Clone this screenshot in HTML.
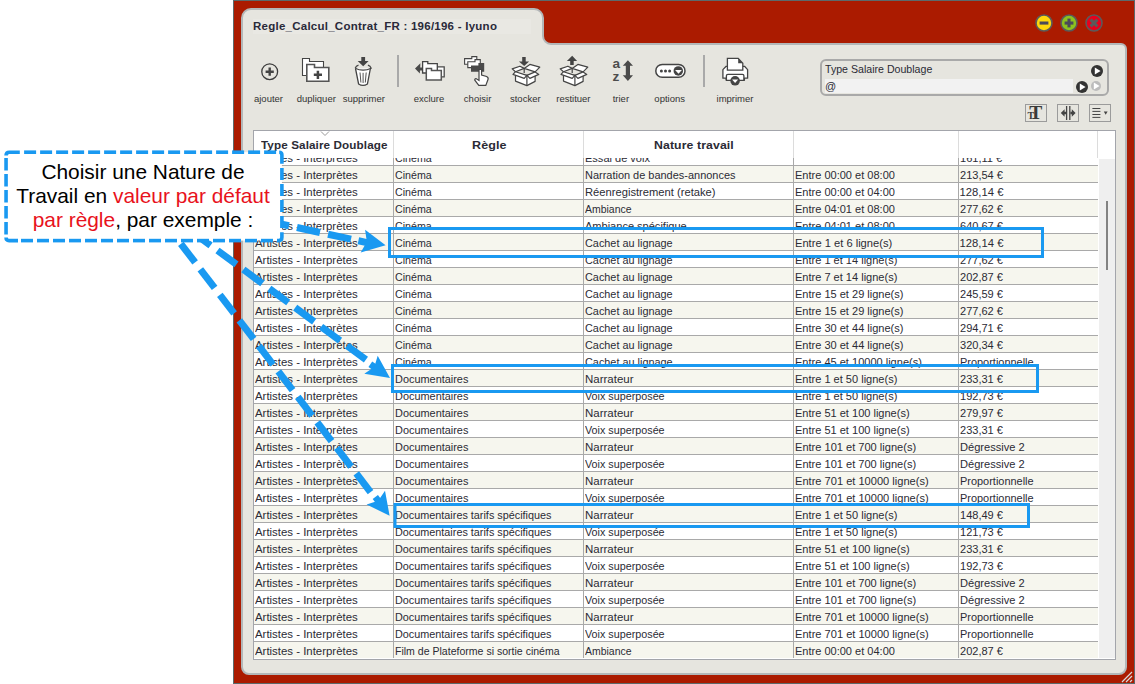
<!DOCTYPE html>
<html><head><meta charset="utf-8">
<style>
html,body{margin:0;padding:0;}
body{width:1135px;height:684px;position:relative;overflow:hidden;background:#fff;font-family:"Liberation Sans",sans-serif;}
.a{position:absolute;}
.t{position:absolute;white-space:nowrap;font-size:11.25px;line-height:17px;color:#2b2b35;}
.lbl{position:absolute;white-space:nowrap;font-size:9.5px;line-height:12px;color:#333;text-align:center;width:80px;}
</style></head><body>

<div class="a" style="left:233px;top:0;width:900px;height:682px;background:#ab1b00;border:1px solid #5c6a6b;"></div>
<svg class="a" style="left:0;top:0" width="1135" height="684"><path d="M 242 18 A 9 9 0 0 1 251 9 H 534 A 9 9 0 0 1 543 18 V 36 A 8 8 0 0 0 551 44 H 1121 A 5 5 0 0 1 1126 49 V 667 A 7 7 0 0 1 1119 674 H 249 A 7 7 0 0 1 242 667 Z" fill="#e6e5df" stroke="#b3b7b8" stroke-width="2"/></svg>
<div class="a" style="left:253px;top:19px;width:278px;height:15px;background:#e9e8e3;"></div>
<div class="a" style="left:253px;top:18px;white-space:nowrap;font-size:11.5px;letter-spacing:0.25px;font-weight:bold;color:#2a2a3a;line-height:17px;">Regle_Calcul_Contrat_FR : 196/196 - Iyuno</div>
<svg class="a" style="left:1033.6px;top:12.8px" width="20" height="20" viewBox="0 0 20 20"><circle cx="10" cy="10" r="8.0" fill="#fed80c" stroke="#5a5a5a" stroke-width="1.6"/><rect x="5.6" y="8.5" width="8.8" height="3.1" fill="#4a4a5a"/></svg>
<svg class="a" style="left:1058.7px;top:12.8px" width="20" height="20" viewBox="0 0 20 20"><circle cx="10" cy="10" r="8.0" fill="#8cc21e" stroke="#5a5a5a" stroke-width="1.6"/><rect x="5.6" y="8.5" width="8.8" height="3.1" fill="#4a4a5a"/><rect x="8.45" y="5.6" width="3.1" height="8.8" fill="#4a4a5a"/></svg>
<svg class="a" style="left:1083.8px;top:12.8px" width="20" height="20" viewBox="0 0 20 20"><circle cx="10" cy="10" r="8.0" fill="#e8001c" stroke="#5a5a5a" stroke-width="1.6"/><path d="M6.6 6.6 L13.4 13.4 M13.4 6.6 L6.6 13.4" stroke="#5a5a5a" stroke-width="3"/></svg>
<div class="a" style="left:397px;top:55px;width:2px;height:32px;background:#a9a9a9;"></div>
<div class="a" style="left:703px;top:55px;width:2px;height:32px;background:#a9a9a9;"></div>
<div class="lbl" style="left:228.5px;top:93px;">ajouter</div>
<div class="lbl" style="left:276.3px;top:93px;">dupliquer</div>
<div class="lbl" style="left:323.8px;top:93px;">supprimer</div>
<div class="lbl" style="left:389px;top:93px;">exclure</div>
<div class="lbl" style="left:437.6px;top:93px;">choisir</div>
<div class="lbl" style="left:485.29999999999995px;top:93px;">stocker</div>
<div class="lbl" style="left:533.4px;top:93px;">restituer</div>
<div class="lbl" style="left:580.9px;top:93px;">trier</div>
<div class="lbl" style="left:629.7px;top:93px;">options</div>
<div class="lbl" style="left:695px;top:93px;">imprimer</div>
<svg class="a" style="left:0;top:0" width="1135" height="130" viewBox="0 0 1135 130">
<g fill="none" stroke="#3c3c3c">
 <!-- ajouter -->
 <circle cx="269.7" cy="71.7" r="7.9" stroke-width="1.3"/>
 <path d="M265.6 71.7 H273.8 M269.7 67.6 V75.8" stroke-width="2.4" stroke="#444"/>
</g>
<!-- dupliquer -->
<path d="M302.5 75.5 V58.5 H309.5 V61.5 H323.5 V75.5 Z" fill="#fff" stroke="#444" stroke-width="1.1"/>
<path d="M306.8 81.2 V64.5 H314.5 V67.5 H328.8 V81.2 Z" fill="#fff" stroke="#555" stroke-width="1.6"/>
<path d="M313.8 74.8 H322 M317.9 70.7 V78.9" stroke="#444" stroke-width="2.5"/>
<!-- supprimer -->
<path d="M361.3 57 H365.1 V61 H368.6 L363.2 66.3 L357.7 61 H361.3 Z" fill="#444"/>
<path d="M355.5 68.5 L358.6 84 Q363 86.8 367.4 84 L370.4 68.5" fill="#fff" stroke="#444" stroke-width="1.3"/>
<path d="M355.2 68.2 Q356 65.8 358.5 65.2 M367.9 65.2 Q370.4 65.8 371.2 68.2 Q363 72 355.2 68.2" fill="none" stroke="#444" stroke-width="1.2"/>
<path d="M360 72.5 L360.9 82.5 M363.1 72.8 V83 M366.2 72.5 L365.3 82.5" stroke="#555" stroke-width="1"/>
<!-- exclure -->
<path d="M415 68.6 L420.4 63.3 L420.2 67.4 H424 V70.4 H420 L419.8 73.4 Z" fill="#4a4a4a"/>
<path d="M432 76.9 V66.9 H444.2 V76.9 Z" fill="#fff" stroke="#4a4a4a" stroke-width="1.3"/>
<path d="M422.6 73 V61.6 H427.8 V63.6 H437.3 V73 Z" fill="#fff" stroke="#444" stroke-width="1.3"/>
<path d="M426.3 79.9 V68.6 H431.5 V70.6 H441.3 V79.9 Z" fill="#fff" stroke="#555" stroke-width="1.5"/>
<!-- choisir -->
<path d="M464.6 64.3 V58.6 H471.8 V56.6 H476.8 V64.3 Z" fill="#fff" stroke="#444" stroke-width="1.1"/>
<path d="M467.8 67.6 V61.7 H475 V59.6 H480.3 V67.6 Z" fill="#fff" stroke="#444" stroke-width="1.1"/>
<path d="M471 71.7 V65.4 H478.4 V63 H484.2 V71.7 Z" fill="#4a4a4a"/>
<path d="M479 69.5 H481.6 V75 L486.6 76.5 Q488.7 77.5 488 79.5 L485.8 85.4 H478.8 L474.8 80.2 Q474.5 78.7 476 78.6 L479 80.5 Z" fill="#fff" stroke="#444" stroke-width="1.2"/>
<!-- stocker -->
<g>
<path d="M522.2 57 H525.7 V61.5 H529.1 L524.2 65.9 L518.9 61.5 H522.2 Z" fill="#444"/>
<g fill="#fff" stroke="#444" stroke-width="1.2" stroke-linejoin="round">
<path d="M515.5 71.7 L524.2 68.4 L519.9 66.2 L512.2 68.9 Z"/>
<path d="M524.2 68.4 L535.1 71.9 L539.8 67.2 L529.9 64.4 Z"/>
<path d="M515.5 75.2 L515.5 81.1 L526.9 85.6 L535.1 81.4 L535.1 75.2 L526.9 75.4 Z"/>
<path d="M524.2 68.4 V73" fill="none"/>
<path d="M515.5 71.7 L526.9 75.4 L524.2 78.4 L513 74.4 Z"/>
<path d="M526.9 75.4 L535.1 71.9 L538.8 74.4 L529.9 78.4 Z"/>
<path d="M526.9 75.4 V85.4" fill="none"/>
</g>
</g>
<!-- restituer -->
<g transform="translate(48 0)">
<path d="M522.2 65 H525.7 V61 H529.1 L524.2 55.7 L518.9 61 H522.2 Z" fill="#444"/>
<g fill="#fff" stroke="#444" stroke-width="1.2" stroke-linejoin="round">
<path d="M515.5 71.7 L524.2 68.4 L519.9 66.2 L512.2 68.9 Z"/>
<path d="M524.2 68.4 L535.1 71.9 L539.8 67.2 L529.9 64.4 Z"/>
<path d="M515.5 75.2 L515.5 81.1 L526.9 85.6 L535.1 81.4 L535.1 75.2 L526.9 75.4 Z"/>
<path d="M524.2 68.4 V73" fill="none"/>
<path d="M515.5 71.7 L526.9 75.4 L524.2 78.4 L513 74.4 Z"/>
<path d="M526.9 75.4 L535.1 71.9 L538.8 74.4 L529.9 78.4 Z"/>
<path d="M526.9 75.4 V85.4" fill="none"/>
</g>
</g>
<!-- trier -->
<text x="612.4" y="67.9" font-family="Liberation Sans" font-weight="bold" font-size="13.6" fill="#4d4d4d">a</text>
<text x="612.6" y="81" font-family="Liberation Sans" font-weight="bold" font-size="13.6" fill="#4d4d4d">z</text>
<path d="M627.9 60.3 L633 65.7 H630 V75.3 H633 L627.9 80.9 L622.8 75.3 H625.8 V65.7 H622.8 Z" fill="#4a4a4a"/>
<!-- options -->
<rect x="655.8" y="64.45" width="29.2" height="12.9" rx="6.45" fill="#fff" stroke="#444" stroke-width="1.5"/>
<circle cx="661.4" cy="71.1" r="1.5" fill="#444"/><circle cx="665.5" cy="71.1" r="1.5" fill="#444"/><circle cx="669.6" cy="71.1" r="1.5" fill="#444"/>
<circle cx="678.3" cy="70.9" r="4.75" fill="#444"/>
<path d="M675.1 70 H681.9 L678.5 73.8 Z" fill="#fff"/>
<!-- imprimer -->
<path d="M722.9 78.2 V69.6 L726.2 66.3 H744.5 L747.6 69.6 V78.2 H744.4 V80.3 H726.2 V78.2 Z" fill="#fff" stroke="#444" stroke-width="1.3" stroke-linejoin="round"/>
<path d="M727.4 70.1 V58.4 H738.2 L742.8 63.2 V70.1 Z" fill="#fff" stroke="#444" stroke-width="1.3"/>
<path d="M738.2 58.4 L742.8 63.2 H738.2 Z" fill="#444"/>
<path d="M726.4 80 V75.8 Q726.4 74.3 727.9 74.3 H742.4 Q743.9 74.3 743.9 75.8 V80" fill="none" stroke="#444" stroke-width="1.3"/>
<circle cx="735.1" cy="80.8" r="4.8" fill="#444"/>
<path d="M732.1 79.5 H738.1 L735.1 83.1 Z" fill="#fff"/>
</svg>

<div class="a" style="left:820px;top:59px;width:285px;height:33px;border:2px solid #a9a9a9;border-radius:6px;"></div>
<div class="a" style="left:825px;top:79px;width:248px;height:14px;background:#f2f2f2;"></div>
<div class="a" style="left:824.6px;top:62px;white-space:nowrap;font-size:11px;line-height:15px;color:#2b2b35;transform:scaleX(0.964);transform-origin:0 0;">Type Salaire Doublage</div>
<div class="a" style="left:825px;top:79px;white-space:nowrap;font-size:11px;line-height:14px;color:#2b2b35;">@</div>
<svg class="a" style="left:1091.2px;top:65.0px" width="12" height="12" viewBox="0 0 12 12"><circle cx="6.0" cy="6.0" r="6.0" fill="#333"/><path d="M 3.8 2.5 L 9.6 6.0 L 3.8 9.5 Z" fill="#fff"/></svg>
<svg class="a" style="left:1076.2px;top:80.7px" width="12" height="12" viewBox="0 0 12 12"><circle cx="6.0" cy="6.0" r="6.0" fill="#333"/><path d="M 3.8 2.5 L 9.6 6.0 L 3.8 9.5 Z" fill="#fff"/></svg>
<svg class="a" style="left:1091.0px;top:81.0px" width="10" height="10" viewBox="0 0 10 10"><circle cx="5.0" cy="5.0" r="5.0" fill="#bcbcbc"/><path d="M 2.8 1.5 L 8.6 5.0 L 2.8 8.5 Z" fill="#fff"/></svg>
<div class="a" style="left:1025px;top:104px;width:20px;height:16px;border:1px solid #9b9b9b;"></div>
<div class="a" style="left:1057px;top:104px;width:20px;height:16px;border:1px solid #9b9b9b;"></div>
<div class="a" style="left:1089px;top:104px;width:20px;height:16px;border:1px solid #9b9b9b;"></div>
<svg class="a" style="left:1020px;top:100px" width="95" height="26" viewBox="1020 100 95 26">
<text x="1029.2" y="119.2" font-family="Liberation Serif" font-weight="bold" font-size="19.5" fill="#3a3a3a">T</text>
<text x="1027.6" y="119.4" font-family="Liberation Serif" font-weight="bold" font-size="10" fill="#3a3a3a">T</text>
<path d="M1066.6 106 V120 M1069.8 106 V120" stroke="#444" stroke-width="1.3"/>
<path d="M1060.8 113 L1064.6 109.2 V111.8 H1066 V114.2 H1064.6 V116.8 Z M1075.6 113 L1071.8 109.2 V111.8 H1070.4 V114.2 H1071.8 V116.8 Z" fill="#444"/>
<path d="M1092.4 108.5 H1100.4 M1092.4 111.4 H1100.4 M1092.4 114.5 H1100.4 M1092.4 117.4 H1100.4" stroke="#444" stroke-width="1"/>
<path d="M1103.8 111.4 H1107.6 L1105.7 114.7 Z" fill="#444"/>
</svg>

<div class="a" style="left:253px;top:130px;width:863px;height:530px;background:#fff;border:1px solid #a3a5ab;box-sizing:border-box;"></div>
<div class="a" style="left:254px;top:158px;width:861px;height:500px;overflow:hidden;"><div class="a" style="left:-254px;top:-158px;width:1135px;height:684px;"><div class="a" style="left:254px;top:149px;width:844px;height:16px;background:#ffffff;"></div><div class="a" style="left:254px;top:165px;width:844px;height:1px;background:#a9a9a9;"></div><div class="t" style="left:254.6px;top:150px;transform:scaleX(1.014);transform-origin:0 0;">Artistes - Interprètes</div><div class="t" style="left:394.6px;top:150px;transform:scaleX(0.946);transform-origin:0 0;">Cinéma</div><div class="t" style="left:584.6px;top:150px;transform:scaleX(0.98);transform-origin:0 0;">Essai de voix</div><div class="t" style="left:959.6px;top:150px;transform:scaleX(0.98);transform-origin:0 0;">161,11 €</div><div class="a" style="left:254px;top:166px;width:844px;height:16px;background:#f6f6ee;"></div><div class="a" style="left:254px;top:182px;width:844px;height:1px;background:#a9a9a9;"></div><div class="t" style="left:254.6px;top:167px;transform:scaleX(1.014);transform-origin:0 0;">Artistes - Interprètes</div><div class="t" style="left:394.6px;top:167px;transform:scaleX(0.946);transform-origin:0 0;">Cinéma</div><div class="t" style="left:584.6px;top:167px;transform:scaleX(0.974);transform-origin:0 0;">Narration de bandes-annonces</div><div class="t" style="left:794.6px;top:167px;transform:scaleX(0.98);transform-origin:0 0;">Entre 00:00 et 08:00</div><div class="t" style="left:959.6px;top:167px;transform:scaleX(0.98);transform-origin:0 0;">213,54 €</div><div class="a" style="left:254px;top:183px;width:844px;height:16px;background:#ffffff;"></div><div class="a" style="left:254px;top:199px;width:844px;height:1px;background:#a9a9a9;"></div><div class="t" style="left:254.6px;top:184px;transform:scaleX(1.014);transform-origin:0 0;">Artistes - Interprètes</div><div class="t" style="left:394.6px;top:184px;transform:scaleX(0.946);transform-origin:0 0;">Cinéma</div><div class="t" style="left:584.6px;top:184px;transform:scaleX(0.994);transform-origin:0 0;">Réenregistrement (retake)</div><div class="t" style="left:794.6px;top:184px;transform:scaleX(0.98);transform-origin:0 0;">Entre 00:00 et 04:00</div><div class="t" style="left:959.6px;top:184px;transform:scaleX(1.0);transform-origin:0 0;">128,14 €</div><div class="a" style="left:254px;top:200px;width:844px;height:16px;background:#f6f6ee;"></div><div class="a" style="left:254px;top:216px;width:844px;height:1px;background:#a9a9a9;"></div><div class="t" style="left:254.6px;top:201px;transform:scaleX(1.014);transform-origin:0 0;">Artistes - Interprètes</div><div class="t" style="left:394.6px;top:201px;transform:scaleX(0.946);transform-origin:0 0;">Cinéma</div><div class="t" style="left:584.6px;top:201px;transform:scaleX(0.93);transform-origin:0 0;">Ambiance</div><div class="t" style="left:794.6px;top:201px;transform:scaleX(0.98);transform-origin:0 0;">Entre 04:01 et 08:00</div><div class="t" style="left:959.6px;top:201px;transform:scaleX(0.98);transform-origin:0 0;">277,62 €</div><div class="a" style="left:254px;top:217px;width:844px;height:16px;background:#ffffff;"></div><div class="a" style="left:254px;top:233px;width:844px;height:1px;background:#a9a9a9;"></div><div class="t" style="left:254.6px;top:218px;transform:scaleX(1.014);transform-origin:0 0;">Artistes - Interprètes</div><div class="t" style="left:394.6px;top:218px;transform:scaleX(0.946);transform-origin:0 0;">Cinéma</div><div class="t" style="left:584.6px;top:218px;transform:scaleX(0.98);transform-origin:0 0;">Ambiance spécifique</div><div class="t" style="left:794.6px;top:218px;transform:scaleX(0.98);transform-origin:0 0;">Entre 04:01 et 08:00</div><div class="t" style="left:959.6px;top:218px;transform:scaleX(0.98);transform-origin:0 0;">640,67 €</div><div class="a" style="left:254px;top:234px;width:844px;height:16px;background:#f6f6ee;"></div><div class="a" style="left:254px;top:250px;width:844px;height:1px;background:#a9a9a9;"></div><div class="t" style="left:254.6px;top:235px;transform:scaleX(1.014);transform-origin:0 0;">Artistes - Interprètes</div><div class="t" style="left:394.6px;top:235px;transform:scaleX(0.946);transform-origin:0 0;">Cinéma</div><div class="t" style="left:584.6px;top:235px;transform:scaleX(0.966);transform-origin:0 0;">Cachet au lignage</div><div class="t" style="left:794.6px;top:235px;transform:scaleX(0.99);transform-origin:0 0;">Entre 1 et 6 ligne(s)</div><div class="t" style="left:959.6px;top:235px;transform:scaleX(1.0);transform-origin:0 0;">128,14 €</div><div class="a" style="left:254px;top:251px;width:844px;height:16px;background:#ffffff;"></div><div class="a" style="left:254px;top:267px;width:844px;height:1px;background:#a9a9a9;"></div><div class="t" style="left:254.6px;top:252px;transform:scaleX(1.014);transform-origin:0 0;">Artistes - Interprètes</div><div class="t" style="left:394.6px;top:252px;transform:scaleX(0.946);transform-origin:0 0;">Cinéma</div><div class="t" style="left:584.6px;top:252px;transform:scaleX(0.966);transform-origin:0 0;">Cachet au lignage</div><div class="t" style="left:794.6px;top:252px;transform:scaleX(0.98);transform-origin:0 0;">Entre 1 et 14 ligne(s)</div><div class="t" style="left:959.6px;top:252px;transform:scaleX(0.98);transform-origin:0 0;">277,62 €</div><div class="a" style="left:254px;top:268px;width:844px;height:16px;background:#f6f6ee;"></div><div class="a" style="left:254px;top:284px;width:844px;height:1px;background:#a9a9a9;"></div><div class="t" style="left:254.6px;top:269px;transform:scaleX(1.014);transform-origin:0 0;">Artistes - Interprètes</div><div class="t" style="left:394.6px;top:269px;transform:scaleX(0.946);transform-origin:0 0;">Cinéma</div><div class="t" style="left:584.6px;top:269px;transform:scaleX(0.966);transform-origin:0 0;">Cachet au lignage</div><div class="t" style="left:794.6px;top:269px;transform:scaleX(0.98);transform-origin:0 0;">Entre 7 et 14 ligne(s)</div><div class="t" style="left:959.6px;top:269px;transform:scaleX(0.98);transform-origin:0 0;">202,87 €</div><div class="a" style="left:254px;top:285px;width:844px;height:16px;background:#ffffff;"></div><div class="a" style="left:254px;top:301px;width:844px;height:1px;background:#a9a9a9;"></div><div class="t" style="left:254.6px;top:286px;transform:scaleX(1.014);transform-origin:0 0;">Artistes - Interprètes</div><div class="t" style="left:394.6px;top:286px;transform:scaleX(0.946);transform-origin:0 0;">Cinéma</div><div class="t" style="left:584.6px;top:286px;transform:scaleX(0.966);transform-origin:0 0;">Cachet au lignage</div><div class="t" style="left:794.6px;top:286px;transform:scaleX(0.98);transform-origin:0 0;">Entre 15 et 29 ligne(s)</div><div class="t" style="left:959.6px;top:286px;transform:scaleX(0.98);transform-origin:0 0;">245,59 €</div><div class="a" style="left:254px;top:302px;width:844px;height:16px;background:#f6f6ee;"></div><div class="a" style="left:254px;top:318px;width:844px;height:1px;background:#a9a9a9;"></div><div class="t" style="left:254.6px;top:303px;transform:scaleX(1.014);transform-origin:0 0;">Artistes - Interprètes</div><div class="t" style="left:394.6px;top:303px;transform:scaleX(0.946);transform-origin:0 0;">Cinéma</div><div class="t" style="left:584.6px;top:303px;transform:scaleX(0.966);transform-origin:0 0;">Cachet au lignage</div><div class="t" style="left:794.6px;top:303px;transform:scaleX(0.98);transform-origin:0 0;">Entre 15 et 29 ligne(s)</div><div class="t" style="left:959.6px;top:303px;transform:scaleX(0.98);transform-origin:0 0;">277,62 €</div><div class="a" style="left:254px;top:319px;width:844px;height:16px;background:#ffffff;"></div><div class="a" style="left:254px;top:335px;width:844px;height:1px;background:#a9a9a9;"></div><div class="t" style="left:254.6px;top:320px;transform:scaleX(1.014);transform-origin:0 0;">Artistes - Interprètes</div><div class="t" style="left:394.6px;top:320px;transform:scaleX(0.946);transform-origin:0 0;">Cinéma</div><div class="t" style="left:584.6px;top:320px;transform:scaleX(0.966);transform-origin:0 0;">Cachet au lignage</div><div class="t" style="left:794.6px;top:320px;transform:scaleX(0.98);transform-origin:0 0;">Entre 30 et 44 ligne(s)</div><div class="t" style="left:959.6px;top:320px;transform:scaleX(0.98);transform-origin:0 0;">294,71 €</div><div class="a" style="left:254px;top:336px;width:844px;height:16px;background:#f6f6ee;"></div><div class="a" style="left:254px;top:352px;width:844px;height:1px;background:#a9a9a9;"></div><div class="t" style="left:254.6px;top:337px;transform:scaleX(1.014);transform-origin:0 0;">Artistes - Interprètes</div><div class="t" style="left:394.6px;top:337px;transform:scaleX(0.946);transform-origin:0 0;">Cinéma</div><div class="t" style="left:584.6px;top:337px;transform:scaleX(0.966);transform-origin:0 0;">Cachet au lignage</div><div class="t" style="left:794.6px;top:337px;transform:scaleX(0.98);transform-origin:0 0;">Entre 30 et 44 ligne(s)</div><div class="t" style="left:959.6px;top:337px;transform:scaleX(0.98);transform-origin:0 0;">320,34 €</div><div class="a" style="left:254px;top:353px;width:844px;height:16px;background:#ffffff;"></div><div class="a" style="left:254px;top:369px;width:844px;height:1px;background:#a9a9a9;"></div><div class="t" style="left:254.6px;top:354px;transform:scaleX(1.014);transform-origin:0 0;">Artistes - Interprètes</div><div class="t" style="left:394.6px;top:354px;transform:scaleX(0.946);transform-origin:0 0;">Cinéma</div><div class="t" style="left:584.6px;top:354px;transform:scaleX(0.966);transform-origin:0 0;">Cachet au lignage</div><div class="t" style="left:794.6px;top:354px;transform:scaleX(0.98);transform-origin:0 0;">Entre 45 et 10000 ligne(s)</div><div class="t" style="left:959.6px;top:354px;transform:scaleX(0.973);transform-origin:0 0;">Proportionnelle</div><div class="a" style="left:254px;top:370px;width:844px;height:16px;background:#f6f6ee;"></div><div class="a" style="left:254px;top:386px;width:844px;height:1px;background:#a9a9a9;"></div><div class="t" style="left:254.6px;top:371px;transform:scaleX(1.014);transform-origin:0 0;">Artistes - Interprètes</div><div class="t" style="left:394.6px;top:371px;transform:scaleX(0.97);transform-origin:0 0;">Documentaires</div><div class="t" style="left:584.6px;top:371px;transform:scaleX(1.02);transform-origin:0 0;">Narrateur</div><div class="t" style="left:794.6px;top:371px;transform:scaleX(0.98);transform-origin:0 0;">Entre 1 et 50 ligne(s)</div><div class="t" style="left:959.6px;top:371px;transform:scaleX(0.98);transform-origin:0 0;">233,31 €</div><div class="a" style="left:254px;top:387px;width:844px;height:16px;background:#ffffff;"></div><div class="a" style="left:254px;top:403px;width:844px;height:1px;background:#a9a9a9;"></div><div class="t" style="left:254.6px;top:388px;transform:scaleX(1.014);transform-origin:0 0;">Artistes - Interprètes</div><div class="t" style="left:394.6px;top:388px;transform:scaleX(0.97);transform-origin:0 0;">Documentaires</div><div class="t" style="left:584.6px;top:388px;transform:scaleX(0.957);transform-origin:0 0;">Voix superposée</div><div class="t" style="left:794.6px;top:388px;transform:scaleX(0.98);transform-origin:0 0;">Entre 1 et 50 ligne(s)</div><div class="t" style="left:959.6px;top:388px;transform:scaleX(0.98);transform-origin:0 0;">192,73 €</div><div class="a" style="left:254px;top:404px;width:844px;height:16px;background:#f6f6ee;"></div><div class="a" style="left:254px;top:420px;width:844px;height:1px;background:#a9a9a9;"></div><div class="t" style="left:254.6px;top:405px;transform:scaleX(1.014);transform-origin:0 0;">Artistes - Interprètes</div><div class="t" style="left:394.6px;top:405px;transform:scaleX(0.97);transform-origin:0 0;">Documentaires</div><div class="t" style="left:584.6px;top:405px;transform:scaleX(1.02);transform-origin:0 0;">Narrateur</div><div class="t" style="left:794.6px;top:405px;transform:scaleX(0.98);transform-origin:0 0;">Entre 51 et 100 ligne(s)</div><div class="t" style="left:959.6px;top:405px;transform:scaleX(0.98);transform-origin:0 0;">279,97 €</div><div class="a" style="left:254px;top:421px;width:844px;height:16px;background:#ffffff;"></div><div class="a" style="left:254px;top:437px;width:844px;height:1px;background:#a9a9a9;"></div><div class="t" style="left:254.6px;top:422px;transform:scaleX(1.014);transform-origin:0 0;">Artistes - Interprètes</div><div class="t" style="left:394.6px;top:422px;transform:scaleX(0.97);transform-origin:0 0;">Documentaires</div><div class="t" style="left:584.6px;top:422px;transform:scaleX(0.957);transform-origin:0 0;">Voix superposée</div><div class="t" style="left:794.6px;top:422px;transform:scaleX(0.98);transform-origin:0 0;">Entre 51 et 100 ligne(s)</div><div class="t" style="left:959.6px;top:422px;transform:scaleX(0.98);transform-origin:0 0;">233,31 €</div><div class="a" style="left:254px;top:438px;width:844px;height:16px;background:#f6f6ee;"></div><div class="a" style="left:254px;top:454px;width:844px;height:1px;background:#a9a9a9;"></div><div class="t" style="left:254.6px;top:439px;transform:scaleX(1.014);transform-origin:0 0;">Artistes - Interprètes</div><div class="t" style="left:394.6px;top:439px;transform:scaleX(0.97);transform-origin:0 0;">Documentaires</div><div class="t" style="left:584.6px;top:439px;transform:scaleX(1.02);transform-origin:0 0;">Narrateur</div><div class="t" style="left:794.6px;top:439px;transform:scaleX(0.983);transform-origin:0 0;">Entre 101 et 700 ligne(s)</div><div class="t" style="left:959.6px;top:439px;transform:scaleX(0.986);transform-origin:0 0;">Dégressive 2</div><div class="a" style="left:254px;top:455px;width:844px;height:16px;background:#ffffff;"></div><div class="a" style="left:254px;top:471px;width:844px;height:1px;background:#a9a9a9;"></div><div class="t" style="left:254.6px;top:456px;transform:scaleX(1.014);transform-origin:0 0;">Artistes - Interprètes</div><div class="t" style="left:394.6px;top:456px;transform:scaleX(0.97);transform-origin:0 0;">Documentaires</div><div class="t" style="left:584.6px;top:456px;transform:scaleX(0.957);transform-origin:0 0;">Voix superposée</div><div class="t" style="left:794.6px;top:456px;transform:scaleX(0.983);transform-origin:0 0;">Entre 101 et 700 ligne(s)</div><div class="t" style="left:959.6px;top:456px;transform:scaleX(0.986);transform-origin:0 0;">Dégressive 2</div><div class="a" style="left:254px;top:472px;width:844px;height:16px;background:#f6f6ee;"></div><div class="a" style="left:254px;top:488px;width:844px;height:1px;background:#a9a9a9;"></div><div class="t" style="left:254.6px;top:473px;transform:scaleX(1.014);transform-origin:0 0;">Artistes - Interprètes</div><div class="t" style="left:394.6px;top:473px;transform:scaleX(0.97);transform-origin:0 0;">Documentaires</div><div class="t" style="left:584.6px;top:473px;transform:scaleX(1.02);transform-origin:0 0;">Narrateur</div><div class="t" style="left:794.6px;top:473px;transform:scaleX(0.985);transform-origin:0 0;">Entre 701 et 10000 ligne(s)</div><div class="t" style="left:959.6px;top:473px;transform:scaleX(0.973);transform-origin:0 0;">Proportionnelle</div><div class="a" style="left:254px;top:489px;width:844px;height:16px;background:#ffffff;"></div><div class="a" style="left:254px;top:505px;width:844px;height:1px;background:#a9a9a9;"></div><div class="t" style="left:254.6px;top:490px;transform:scaleX(1.014);transform-origin:0 0;">Artistes - Interprètes</div><div class="t" style="left:394.6px;top:490px;transform:scaleX(0.97);transform-origin:0 0;">Documentaires</div><div class="t" style="left:584.6px;top:490px;transform:scaleX(0.957);transform-origin:0 0;">Voix superposée</div><div class="t" style="left:794.6px;top:490px;transform:scaleX(0.985);transform-origin:0 0;">Entre 701 et 10000 ligne(s)</div><div class="t" style="left:959.6px;top:490px;transform:scaleX(0.973);transform-origin:0 0;">Proportionnelle</div><div class="a" style="left:254px;top:506px;width:844px;height:16px;background:#f6f6ee;"></div><div class="a" style="left:254px;top:522px;width:844px;height:1px;background:#a9a9a9;"></div><div class="t" style="left:254.6px;top:507px;transform:scaleX(1.014);transform-origin:0 0;">Artistes - Interprètes</div><div class="t" style="left:394.6px;top:507px;transform:scaleX(0.9625);transform-origin:0 0;">Documentaires tarifs spécifiques</div><div class="t" style="left:584.6px;top:507px;transform:scaleX(1.02);transform-origin:0 0;">Narrateur</div><div class="t" style="left:794.6px;top:507px;transform:scaleX(0.98);transform-origin:0 0;">Entre 1 et 50 ligne(s)</div><div class="t" style="left:959.6px;top:507px;transform:scaleX(0.98);transform-origin:0 0;">148,49 €</div><div class="a" style="left:254px;top:523px;width:844px;height:16px;background:#ffffff;"></div><div class="a" style="left:254px;top:539px;width:844px;height:1px;background:#a9a9a9;"></div><div class="t" style="left:254.6px;top:524px;transform:scaleX(1.014);transform-origin:0 0;">Artistes - Interprètes</div><div class="t" style="left:394.6px;top:524px;transform:scaleX(0.9625);transform-origin:0 0;">Documentaires tarifs spécifiques</div><div class="t" style="left:584.6px;top:524px;transform:scaleX(0.957);transform-origin:0 0;">Voix superposée</div><div class="t" style="left:794.6px;top:524px;transform:scaleX(0.98);transform-origin:0 0;">Entre 1 et 50 ligne(s)</div><div class="t" style="left:959.6px;top:524px;transform:scaleX(0.98);transform-origin:0 0;">121,73 €</div><div class="a" style="left:254px;top:540px;width:844px;height:16px;background:#f6f6ee;"></div><div class="a" style="left:254px;top:556px;width:844px;height:1px;background:#a9a9a9;"></div><div class="t" style="left:254.6px;top:541px;transform:scaleX(1.014);transform-origin:0 0;">Artistes - Interprètes</div><div class="t" style="left:394.6px;top:541px;transform:scaleX(0.9625);transform-origin:0 0;">Documentaires tarifs spécifiques</div><div class="t" style="left:584.6px;top:541px;transform:scaleX(1.02);transform-origin:0 0;">Narrateur</div><div class="t" style="left:794.6px;top:541px;transform:scaleX(0.98);transform-origin:0 0;">Entre 51 et 100 ligne(s)</div><div class="t" style="left:959.6px;top:541px;transform:scaleX(0.98);transform-origin:0 0;">233,31 €</div><div class="a" style="left:254px;top:557px;width:844px;height:16px;background:#ffffff;"></div><div class="a" style="left:254px;top:573px;width:844px;height:1px;background:#a9a9a9;"></div><div class="t" style="left:254.6px;top:558px;transform:scaleX(1.014);transform-origin:0 0;">Artistes - Interprètes</div><div class="t" style="left:394.6px;top:558px;transform:scaleX(0.9625);transform-origin:0 0;">Documentaires tarifs spécifiques</div><div class="t" style="left:584.6px;top:558px;transform:scaleX(0.957);transform-origin:0 0;">Voix superposée</div><div class="t" style="left:794.6px;top:558px;transform:scaleX(0.98);transform-origin:0 0;">Entre 51 et 100 ligne(s)</div><div class="t" style="left:959.6px;top:558px;transform:scaleX(0.98);transform-origin:0 0;">192,73 €</div><div class="a" style="left:254px;top:574px;width:844px;height:16px;background:#f6f6ee;"></div><div class="a" style="left:254px;top:590px;width:844px;height:1px;background:#a9a9a9;"></div><div class="t" style="left:254.6px;top:575px;transform:scaleX(1.014);transform-origin:0 0;">Artistes - Interprètes</div><div class="t" style="left:394.6px;top:575px;transform:scaleX(0.9625);transform-origin:0 0;">Documentaires tarifs spécifiques</div><div class="t" style="left:584.6px;top:575px;transform:scaleX(1.02);transform-origin:0 0;">Narrateur</div><div class="t" style="left:794.6px;top:575px;transform:scaleX(0.983);transform-origin:0 0;">Entre 101 et 700 ligne(s)</div><div class="t" style="left:959.6px;top:575px;transform:scaleX(0.986);transform-origin:0 0;">Dégressive 2</div><div class="a" style="left:254px;top:591px;width:844px;height:16px;background:#ffffff;"></div><div class="a" style="left:254px;top:607px;width:844px;height:1px;background:#a9a9a9;"></div><div class="t" style="left:254.6px;top:592px;transform:scaleX(1.014);transform-origin:0 0;">Artistes - Interprètes</div><div class="t" style="left:394.6px;top:592px;transform:scaleX(0.9625);transform-origin:0 0;">Documentaires tarifs spécifiques</div><div class="t" style="left:584.6px;top:592px;transform:scaleX(0.957);transform-origin:0 0;">Voix superposée</div><div class="t" style="left:794.6px;top:592px;transform:scaleX(0.983);transform-origin:0 0;">Entre 101 et 700 ligne(s)</div><div class="t" style="left:959.6px;top:592px;transform:scaleX(0.986);transform-origin:0 0;">Dégressive 2</div><div class="a" style="left:254px;top:608px;width:844px;height:16px;background:#f6f6ee;"></div><div class="a" style="left:254px;top:624px;width:844px;height:1px;background:#a9a9a9;"></div><div class="t" style="left:254.6px;top:609px;transform:scaleX(1.014);transform-origin:0 0;">Artistes - Interprètes</div><div class="t" style="left:394.6px;top:609px;transform:scaleX(0.9625);transform-origin:0 0;">Documentaires tarifs spécifiques</div><div class="t" style="left:584.6px;top:609px;transform:scaleX(1.02);transform-origin:0 0;">Narrateur</div><div class="t" style="left:794.6px;top:609px;transform:scaleX(0.985);transform-origin:0 0;">Entre 701 et 10000 ligne(s)</div><div class="t" style="left:959.6px;top:609px;transform:scaleX(0.973);transform-origin:0 0;">Proportionnelle</div><div class="a" style="left:254px;top:625px;width:844px;height:16px;background:#ffffff;"></div><div class="a" style="left:254px;top:641px;width:844px;height:1px;background:#a9a9a9;"></div><div class="t" style="left:254.6px;top:626px;transform:scaleX(1.014);transform-origin:0 0;">Artistes - Interprètes</div><div class="t" style="left:394.6px;top:626px;transform:scaleX(0.9625);transform-origin:0 0;">Documentaires tarifs spécifiques</div><div class="t" style="left:584.6px;top:626px;transform:scaleX(0.957);transform-origin:0 0;">Voix superposée</div><div class="t" style="left:794.6px;top:626px;transform:scaleX(0.985);transform-origin:0 0;">Entre 701 et 10000 ligne(s)</div><div class="t" style="left:959.6px;top:626px;transform:scaleX(0.973);transform-origin:0 0;">Proportionnelle</div><div class="a" style="left:254px;top:642px;width:844px;height:16px;background:#f6f6ee;"></div><div class="a" style="left:254px;top:658px;width:844px;height:1px;background:#a9a9a9;"></div><div class="t" style="left:254.6px;top:643px;transform:scaleX(1.014);transform-origin:0 0;">Artistes - Interprètes</div><div class="t" style="left:394.6px;top:643px;transform:scaleX(0.937);transform-origin:0 0;">Film de Plateforme si sortie cinéma</div><div class="t" style="left:584.6px;top:643px;transform:scaleX(0.93);transform-origin:0 0;">Ambiance</div><div class="t" style="left:794.6px;top:643px;transform:scaleX(0.98);transform-origin:0 0;">Entre 00:00 et 04:00</div><div class="t" style="left:959.6px;top:643px;transform:scaleX(0.98);transform-origin:0 0;">202,87 €</div></div></div>
<div class="a" style="left:393px;top:158px;width:1px;height:500px;background:#a9a9a9;"></div>
<div class="a" style="left:583px;top:158px;width:1px;height:500px;background:#a9a9a9;"></div>
<div class="a" style="left:793px;top:158px;width:1px;height:500px;background:#a9a9a9;"></div>
<div class="a" style="left:958px;top:158px;width:1px;height:500px;background:#a9a9a9;"></div>
<div class="a" style="left:254px;top:131px;width:844px;height:27px;background:#fff;"></div>
<div class="a" style="left:393px;top:131px;width:1px;height:27px;background:#dcdcdc;"></div>
<div class="a" style="left:583px;top:131px;width:1px;height:27px;background:#dcdcdc;"></div>
<div class="a" style="left:793px;top:131px;width:1px;height:27px;background:#dcdcdc;"></div>
<div class="a" style="left:958px;top:131px;width:1px;height:27px;background:#dcdcdc;"></div>
<div class="a" style="left:1097px;top:131px;width:1px;height:27px;background:#dcdcdc;"></div>
<div class="a" style="left:261.0px;top:137px;white-space:nowrap;font-size:11.5px;font-weight:bold;letter-spacing:0.1px;line-height:17px;color:#2b2b35;transform:scaleX(1.016);transform-origin:0 0;">Type Salaire Doublage</div>
<div class="a" style="left:472.4px;top:137px;white-space:nowrap;font-size:11.5px;font-weight:bold;letter-spacing:0.1px;line-height:17px;color:#2b2b35;transform:scaleX(1.09);transform-origin:0 0;">Règle</div>
<div class="a" style="left:654.2px;top:137px;white-space:nowrap;font-size:11.5px;font-weight:bold;letter-spacing:0.1px;line-height:17px;color:#2b2b35;transform:scaleX(1.066);transform-origin:0 0;">Nature travail</div>
<svg class="a" style="left:320px;top:130px" width="10" height="7"><path d="M1 1.5 L5 5.5 L9 1.5" fill="none" stroke="#9a9a9a" stroke-width="1"/></svg>
<div class="a" style="left:1099px;top:159px;width:16px;height:499px;background:#efefef;"></div>
<div class="a" style="left:1106px;top:201px;width:2px;height:69px;background:#828282;"></div>
<svg class="a" style="left:1120px;top:670px" width="14" height="13"><path d="M12 2 L2 12 M12 6 L6 12 M12 10 L10 12" stroke="#d9d9d9" stroke-width="1.2"/></svg>
<svg class="a" style="left:0;top:0" width="1135" height="684" viewBox="0 0 1135 684">
<line x1="265.99" y1="220.81" x2="288.96" y2="225.77" stroke="#1999f1" stroke-width="7.0"/><line x1="296.97" y1="227.51" x2="319.94" y2="232.47" stroke="#1999f1" stroke-width="7.0"/><line x1="328.06" y1="234.23" x2="351.03" y2="239.19" stroke="#1999f1" stroke-width="7.0"/><line x1="358.41" y1="240.79" x2="370.43" y2="243.39" stroke="#1999f1" stroke-width="7.0"/><path d="M 385.60 245.30 L 365.10 229.80 L 366.83 241.87 L 360.70 252.50 Z" fill="#1999f1"/>
<line x1="191.62" y1="231.43" x2="210.55" y2="245.36" stroke="#1999f1" stroke-width="7.0"/><line x1="217.52" y1="250.49" x2="236.45" y2="264.41" stroke="#1999f1" stroke-width="7.0"/><line x1="243.41" y1="269.54" x2="262.34" y2="283.47" stroke="#1999f1" stroke-width="7.0"/><line x1="269.31" y1="288.60" x2="288.24" y2="302.52" stroke="#1999f1" stroke-width="7.0"/><line x1="295.20" y1="307.65" x2="314.13" y2="321.58" stroke="#1999f1" stroke-width="7.0"/><line x1="321.10" y1="326.70" x2="340.03" y2="340.63" stroke="#1999f1" stroke-width="7.0"/><line x1="346.99" y1="345.76" x2="365.92" y2="359.68" stroke="#1999f1" stroke-width="7.0"/><line x1="370.34" y1="364.29" x2="376.76" y2="368.73" stroke="#1999f1" stroke-width="6.6499999999999995"/><path d="M 390.00 377.90 L 377.70 355.70 L 374.29 367.03 L 364.30 373.80 Z" fill="#1999f1"/>
<line x1="161.37" y1="218.29" x2="175.64" y2="236.96" stroke="#1999f1" stroke-width="7.0"/><line x1="180.86" y1="243.80" x2="195.13" y2="262.47" stroke="#1999f1" stroke-width="7.0"/><line x1="200.35" y1="269.31" x2="214.62" y2="287.98" stroke="#1999f1" stroke-width="7.0"/><line x1="219.84" y1="294.81" x2="234.11" y2="313.49" stroke="#1999f1" stroke-width="7.0"/><line x1="239.33" y1="320.32" x2="253.60" y2="338.99" stroke="#1999f1" stroke-width="7.0"/><line x1="258.82" y1="345.83" x2="273.08" y2="364.50" stroke="#1999f1" stroke-width="7.0"/><line x1="278.31" y1="371.33" x2="292.57" y2="390.01" stroke="#1999f1" stroke-width="7.0"/><line x1="297.79" y1="396.84" x2="312.06" y2="415.51" stroke="#1999f1" stroke-width="7.0"/><line x1="317.28" y1="422.35" x2="331.55" y2="441.02" stroke="#1999f1" stroke-width="7.0"/><line x1="336.77" y1="447.85" x2="351.04" y2="466.53" stroke="#1999f1" stroke-width="7.0"/><line x1="356.26" y1="473.36" x2="370.53" y2="492.03" stroke="#1999f1" stroke-width="7.0"/><line x1="375.31" y1="496.96" x2="380.04" y2="503.17" stroke="#1999f1" stroke-width="6.6499999999999995"/><path d="M 389.60 515.70 L 385.00 490.70 L 378.23 500.78 L 366.60 504.50 Z" fill="#1999f1"/>
<rect x="389.5" y="228.5" width="653" height="28" fill="none" stroke="#1999f1" stroke-width="3"/>
<rect x="392.5" y="365.5" width="645" height="26" fill="none" stroke="#1999f1" stroke-width="3"/>
<rect x="395.0" y="504.5" width="633.5" height="22" fill="none" stroke="#1999f1" stroke-width="3"/>
<rect x="6" y="152.2" width="275.9" height="88.4" fill="#fff"/>
<path d="M 6.05 155.6 Q 6.05 152.2 9.25 152.2 H 19.8" fill="none" stroke="#1999f1" stroke-width="3.6"/><rect x="24.10" y="150.40" width="12.00" height="3.6" fill="#1999f1"/><rect x="40.10" y="150.40" width="12.00" height="3.6" fill="#1999f1"/><rect x="56.10" y="150.40" width="12.00" height="3.6" fill="#1999f1"/><rect x="72.10" y="150.40" width="12.00" height="3.6" fill="#1999f1"/><rect x="88.10" y="150.40" width="12.00" height="3.6" fill="#1999f1"/><rect x="104.10" y="150.40" width="12.00" height="3.6" fill="#1999f1"/><rect x="120.10" y="150.40" width="12.00" height="3.6" fill="#1999f1"/><rect x="136.10" y="150.40" width="12.00" height="3.6" fill="#1999f1"/><rect x="152.10" y="150.40" width="12.00" height="3.6" fill="#1999f1"/><rect x="168.10" y="150.40" width="12.00" height="3.6" fill="#1999f1"/><rect x="184.10" y="150.40" width="12.00" height="3.6" fill="#1999f1"/><rect x="200.10" y="150.40" width="12.00" height="3.6" fill="#1999f1"/><rect x="216.10" y="150.40" width="12.00" height="3.6" fill="#1999f1"/><rect x="232.10" y="150.40" width="12.00" height="3.6" fill="#1999f1"/><rect x="248.10" y="150.40" width="12.00" height="3.6" fill="#1999f1"/><rect x="264.10" y="150.40" width="12.00" height="3.6" fill="#1999f1"/><path d="M 279.2 152.2 Q 281.9 152.2 281.9 155 V 163.8" fill="none" stroke="#1999f1" stroke-width="3.6"/><rect x="280.10" y="168.00" width="3.6" height="12.00" fill="#1999f1"/><rect x="280.10" y="184.00" width="3.6" height="12.00" fill="#1999f1"/><rect x="280.10" y="200.00" width="3.6" height="12.00" fill="#1999f1"/><rect x="280.10" y="216.00" width="3.6" height="12.00" fill="#1999f1"/><path d="M 281.9 232.3 V 237.2 Q 281.9 240.6 278.5 240.6 H 277" fill="none" stroke="#1999f1" stroke-width="3.6"/><path d="M 6.05 237.6 Q 6.05 240.6 9.05 240.6 H 18" fill="none" stroke="#1999f1" stroke-width="3.6"/><rect x="21.00" y="238.80" width="12.00" height="3.6" fill="#1999f1"/><rect x="37.00" y="238.80" width="12.00" height="3.6" fill="#1999f1"/><rect x="53.00" y="238.80" width="12.00" height="3.6" fill="#1999f1"/><rect x="69.00" y="238.80" width="12.00" height="3.6" fill="#1999f1"/><rect x="85.00" y="238.80" width="12.00" height="3.6" fill="#1999f1"/><rect x="101.00" y="238.80" width="12.00" height="3.6" fill="#1999f1"/><rect x="117.00" y="238.80" width="12.00" height="3.6" fill="#1999f1"/><rect x="133.00" y="238.80" width="12.00" height="3.6" fill="#1999f1"/><rect x="149.00" y="238.80" width="12.00" height="3.6" fill="#1999f1"/><rect x="165.00" y="238.80" width="12.00" height="3.6" fill="#1999f1"/><rect x="181.00" y="238.80" width="12.00" height="3.6" fill="#1999f1"/><rect x="197.00" y="238.80" width="12.00" height="3.6" fill="#1999f1"/><rect x="213.00" y="238.80" width="12.00" height="3.6" fill="#1999f1"/><rect x="229.00" y="238.80" width="12.00" height="3.6" fill="#1999f1"/><rect x="245.00" y="238.80" width="12.00" height="3.6" fill="#1999f1"/><rect x="261.00" y="238.80" width="12.00" height="3.6" fill="#1999f1"/><rect x="4.25" y="158.00" width="3.6" height="12.50" fill="#1999f1"/><rect x="4.25" y="174.00" width="3.6" height="12.50" fill="#1999f1"/><rect x="4.25" y="190.00" width="3.6" height="12.50" fill="#1999f1"/><rect x="4.25" y="206.00" width="3.6" height="12.50" fill="#1999f1"/><rect x="4.25" y="222.00" width="3.6" height="12.50" fill="#1999f1"/>
</svg>
<div class="a" style="left:0;top:160px;width:286px;text-align:center;font-size:20.9px;line-height:23.9px;color:#000;white-space:nowrap;">Choisir une Nature de<br>Travail en <span style="color:#e8121c">valeur par défaut</span><br><span style="color:#e8121c">par règle</span>, par exemple :</div>
</body></html>
